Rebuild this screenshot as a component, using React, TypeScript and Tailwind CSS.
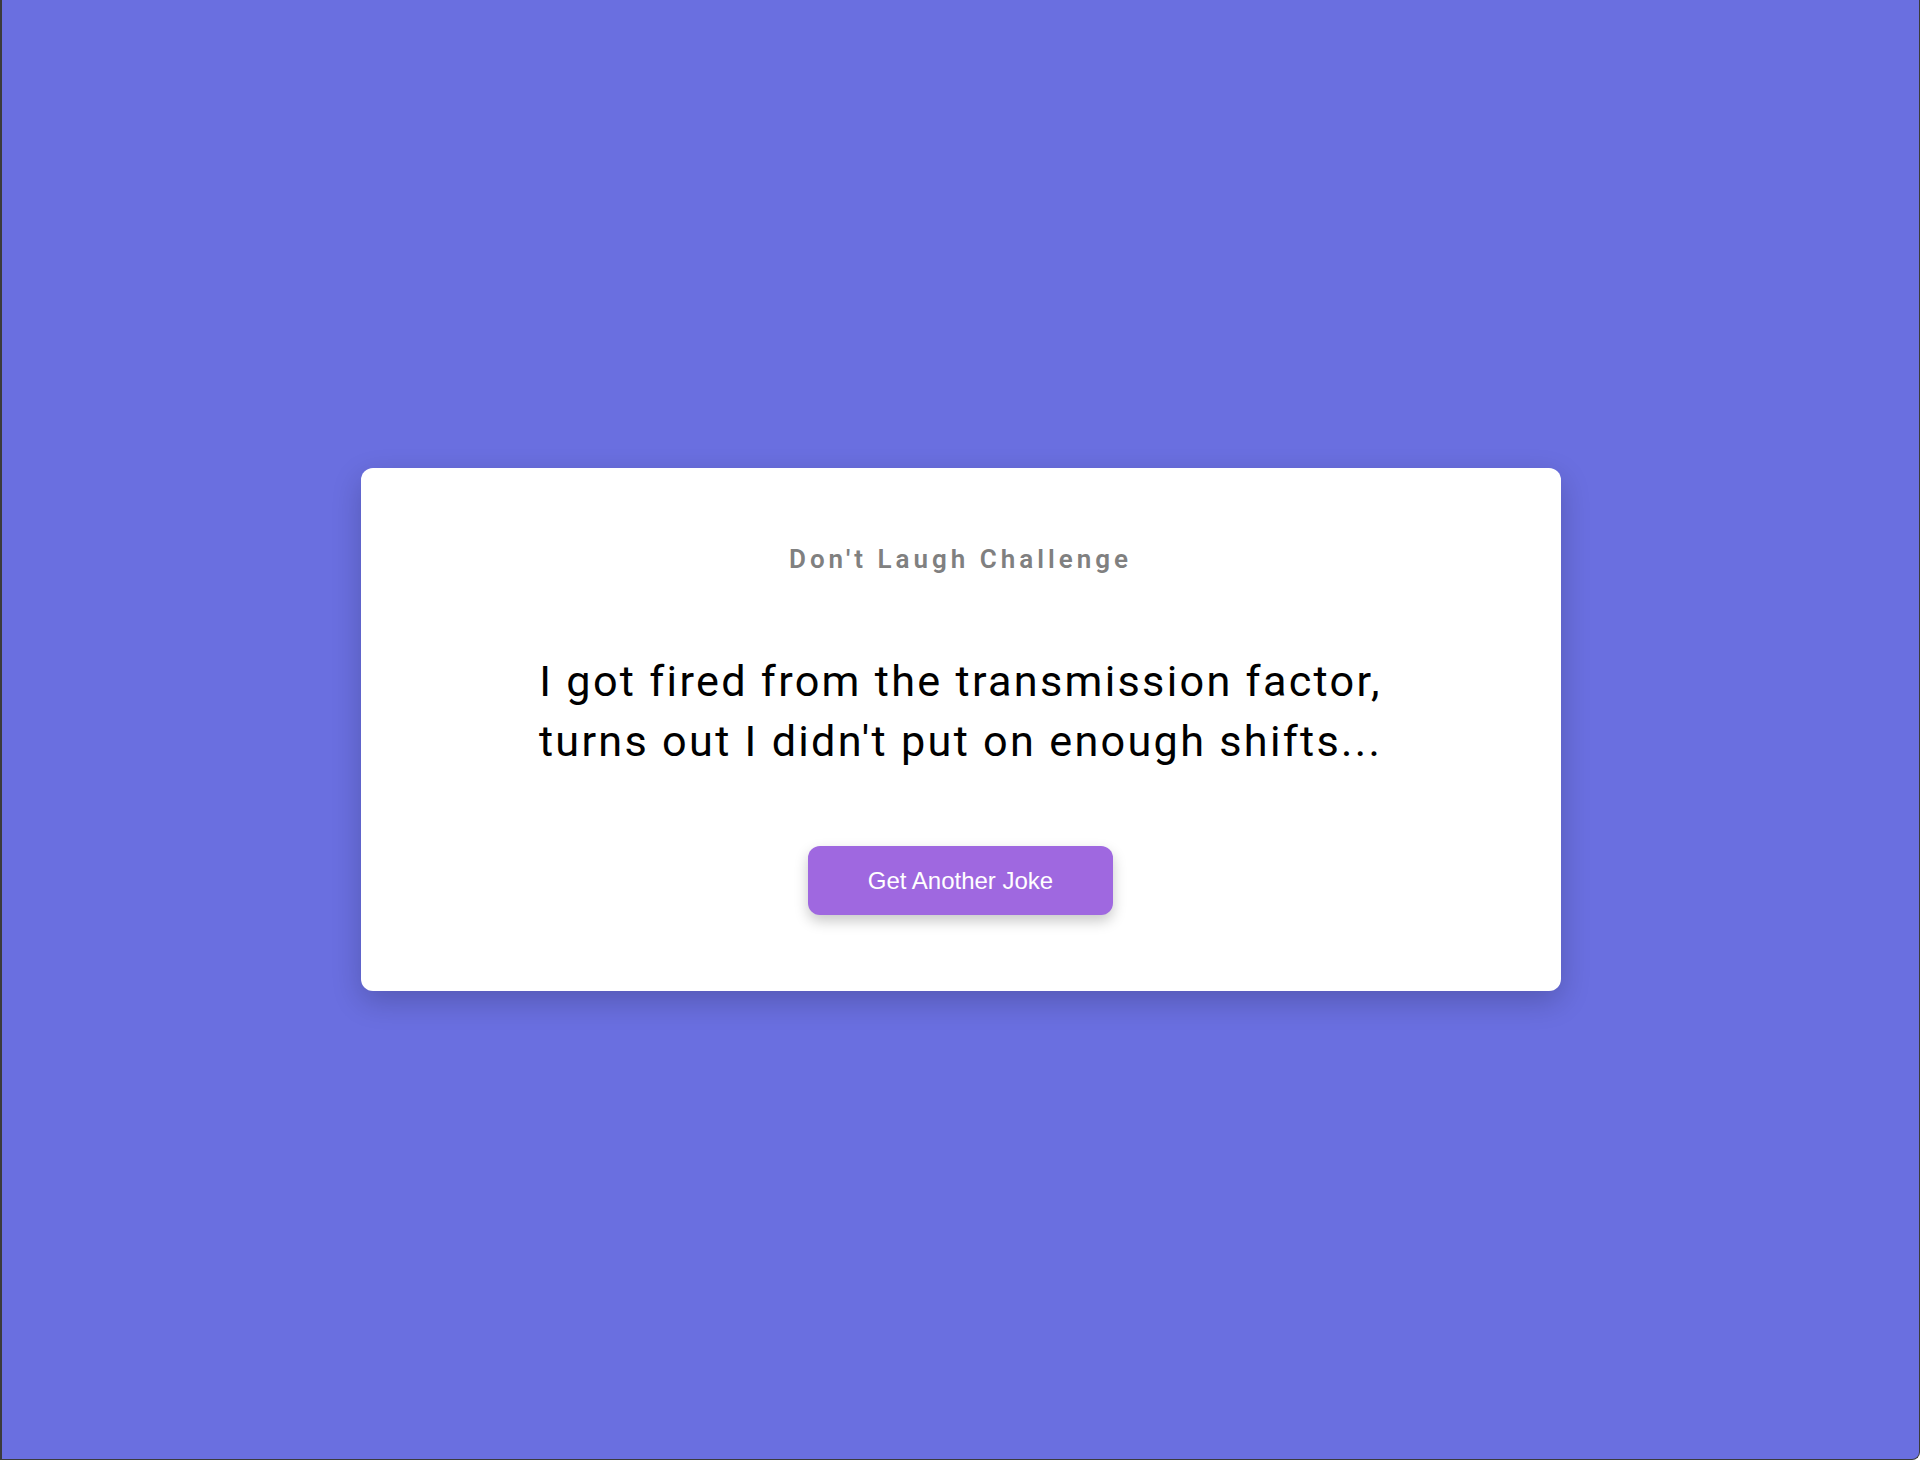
import { useState } from 'react';

const JOKES = [
  "I got fired from the transmission factor, turns out I didn't put on enough shifts...",
  "I told my wife she was drawing her eyebrows too high. She looked surprised.",
  "Why don't skeletons fight each other? They don't have the guts.",
];

export default function App() {
  const [index, setIndex] = useState(0);

  return (
    <div className="min-h-screen flex items-center justify-center bg-[#6a6fe0] border-l-2 border-r border-b border-[#3b3b3b] rounded-br-lg font-['Roboto',sans-serif]">
      <div className="w-[1200px] bg-white rounded-xl shadow-[0_10px_30px_rgba(0,0,0,0.2)] pt-[73px] pb-[76px] flex flex-col items-center text-center">
        {/* Title */}
        <h2 className="text-[26px] leading-[36px] font-semibold tracking-[4px] text-[#808080] mb-[75px]">
          Don&apos;t Laugh Challenge
        </h2>

        {/* Joke */}
        <p className="max-w-[900px] text-[43.2px] leading-[60px] tracking-[2.3px] text-black mb-[74px]">
          {JOKES[index]}
        </p>

        <button
          onClick={() => setIndex((index + 1) % JOKES.length)}
          className="px-[60px] py-[20.5px] rounded-xl bg-[#9f68e0] text-white text-[24px] leading-[28px] font-['Liberation_Sans',Arial,sans-serif] shadow-[0_6px_14px_rgba(0,0,0,0.22)]"
        >
          Get Another Joke
        </button>
      </div>
    </div>
  );
}
